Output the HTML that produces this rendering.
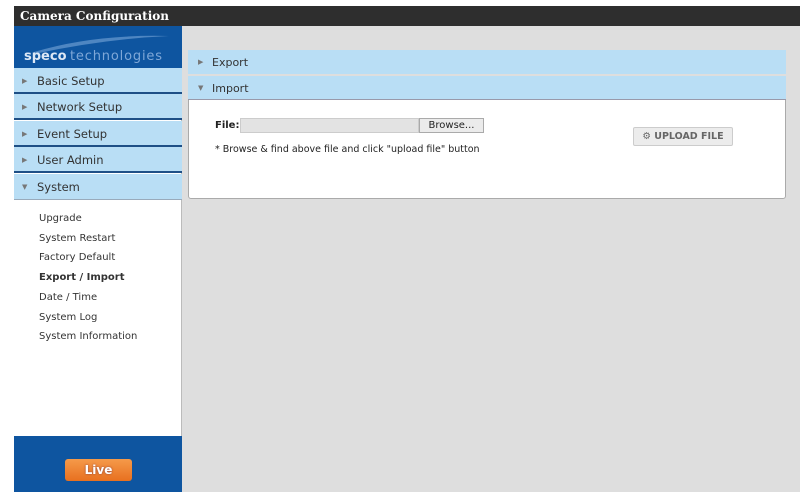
<!DOCTYPE html>
<html><head><style>
*{margin:0;padding:0;box-sizing:border-box}
body{width:806px;height:496px;background:#fff;position:relative;overflow:hidden;font-family:"DejaVu Sans","Liberation Sans",sans-serif;}
.abs{position:absolute}
#title{left:14px;top:6px;width:786px;height:20px;background:#2e2e2e;color:#fff;font-family:"DejaVu Serif","Liberation Serif",serif;font-weight:bold;font-size:12px;line-height:20px;padding-left:6px}
#main{left:182px;top:26px;width:618px;height:466px;background:#dedede}
#side{left:14px;top:26px;width:168px;height:410px;background:#fff;border-right:1px solid #bbb}
#logo{left:14px;top:26px;width:168px;height:42px;background:#0e55a0;overflow:hidden}
.mi{position:absolute;left:14px;width:168px;height:26px;background:#b9def5;border-bottom:2px solid #1e4f86;font-size:11.5px;color:#333;line-height:26px;padding-left:23px}
.mi span{position:absolute;left:8px;font-size:7px;color:#777}
.sub{position:absolute;left:39px;font-size:10px;color:#333}
#bot{left:14px;top:436px;width:168px;height:56px;background:#0e55a0}
#live{left:65px;top:459px;width:67px;height:22px;background:linear-gradient(#f59a4a,#e8701f);border-radius:3px;color:#fff;font-weight:bold;font-size:12px;text-align:center;line-height:22px;text-shadow:0 0 2px #844}
.hd{position:absolute;left:188px;width:598px;height:24px;background:#b9def5;font-size:11px;color:#333;line-height:25px;padding-left:24px}
.hd span{position:absolute;left:10px;font-size:7px;color:#777}
</style></head><body>
<div id="title" class="abs">Camera Configuration</div>
<div id="main" class="abs"></div>
<div id="side" class="abs"></div>
<div id="logo" class="abs">
<svg width="168" height="42"><path d="M20 26 Q80 8 155 10 Q90 13 20 28Z" fill="#6a9bd0" opacity=".7"/>
<text x="10" y="34" font-family="DejaVu Sans" font-weight="bold" font-size="13" fill="#dde8f5">speco</text>
<text x="56" y="34" font-family="DejaVu Sans" font-size="13" fill="#7fa8d8" textLength="92">technologies</text></svg></div>
<div class="mi" style="top:68px"><span>▶</span>Basic Setup</div>
<div class="mi" style="top:94px"><span>▶</span>Network Setup</div>
<div class="mi" style="top:121px"><span>▶</span>Event Setup</div>
<div class="mi" style="top:147px"><span>▶</span>User Admin</div>
<div class="mi" style="top:174px;border-bottom:1px solid #9ab"><span>▼</span>System</div>
<div class="sub" style="top:213px">Upgrade</div>
<div class="sub" style="top:233px">System Restart</div>
<div class="sub" style="top:252px">Factory Default</div>
<div class="sub" style="top:272px;font-weight:bold">Export / Import</div>
<div class="sub" style="top:292px">Date / Time</div>
<div class="sub" style="top:312px">System Log</div>
<div class="sub" style="top:331px">System Information</div>
<div id="bot" class="abs"></div>
<div id="live" class="abs">Live</div>
<div class="hd" style="top:50px"><span>▶</span>Export</div>
<div class="abs" style="left:188px;top:76px;width:598px;height:123px;background:#fff;border:1px solid #aaa;border-radius:3px"></div>
<div class="hd" style="top:76px;border-bottom:1px solid #99a"><span>▼</span>Import</div>
<div class="abs" style="left:215px;top:120px;font-size:10px;font-weight:bold;color:#222">File:</div>
<div class="abs" style="left:240px;top:118px;width:179px;height:15px;background:#e3e3e3;border:1px solid #ccc"></div>
<div class="abs" style="left:419px;top:118px;width:65px;height:15px;background:#ebebeb;border:1px solid #aaa;font-size:10px;text-align:center;line-height:13px;color:#222">Browse...</div>
<div class="abs" style="left:215px;top:144px;font-size:9.5px;color:#222">* Browse &amp; find above file and click "upload file" button</div>
<div class="abs" style="left:633px;top:127px;width:100px;height:19px;background:#ececec;border:1px solid #ccc;border-radius:2px;font-size:9.5px;font-weight:bold;color:#666;text-align:center;line-height:17px">⚙ UPLOAD FILE</div>
</body></html>
